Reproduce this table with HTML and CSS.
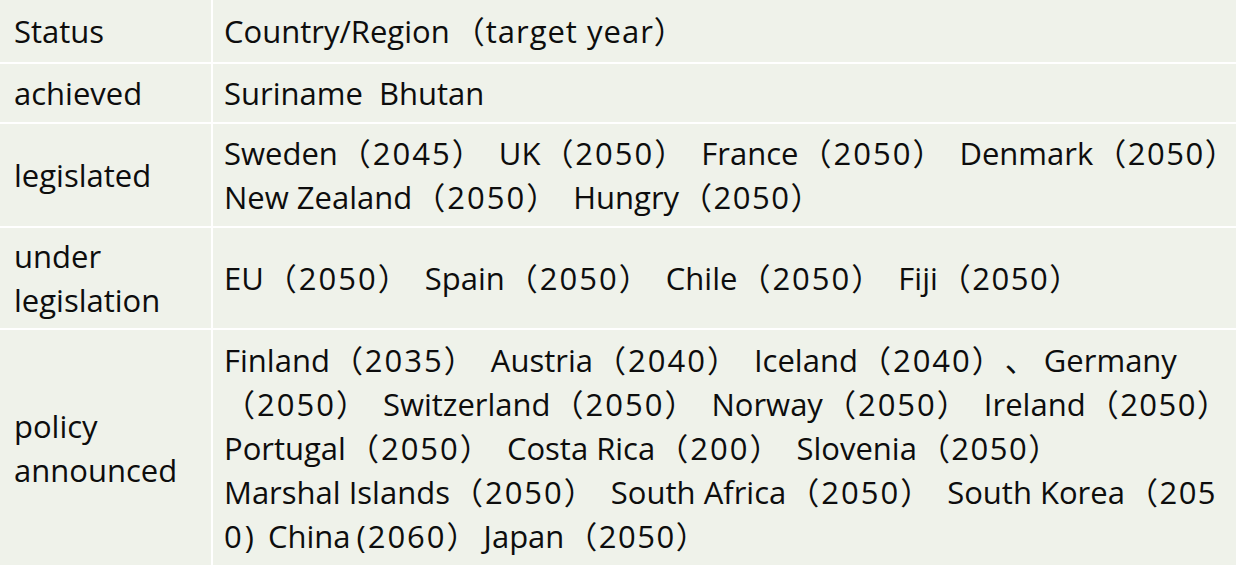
FILE: index.html
```html
<!DOCTYPE html>
<html lang="en">
<head>
<meta charset="utf-8">
<title>Carbon neutrality targets</title>
<link rel="stylesheet" href="styles.css">
</head>
<body>
<div class="table">
  <div class="cell status"><span class="ln">Status</span></div>
  <div class="cell list"><span class="ln">Country/Region<span class="y head end">（target year）</span></span></div>

  <div class="cell status"><span class="ln">achieved</span></div>
  <div class="cell list"><span class="ln">Suriname  Bhutan</span></div>

  <div class="cell status"><span class="ln">legislated</span></div>
  <div class="cell list">
    <span class="ln">Sweden<span class="y">（2045）</span> UK<span class="y">（2050）</span> France<span class="y">（2050）</span> Denmark<span class="y end">（2050）</span></span>
    <span class="ln">New Zealand<span class="y">（2050）</span> Hungry<span class="y end">（2050）</span></span>
  </div>

  <div class="cell status"><span class="ln">under</span><span class="ln">legislation</span></div>
  <div class="cell list"><span class="ln">EU<span class="y">（2050）</span> Spain<span class="y">（2050）</span> Chile<span class="y">（2050）</span> Fiji<span class="y end">（2050）</span></span></div>

  <div class="cell status"><span class="ln">policy</span><span class="ln">announced</span></div>
  <div class="cell list">
    <span class="ln">Finland<span class="y">（2035）</span> Austria<span class="y">（2040）</span> Iceland<span class="y">（2040）、</span>Germany</span>
    <span class="ln"><span class="y lead">（2050）</span> Switzerland<span class="y">（2050）</span> Norway<span class="y">（2050）</span> Ireland<span class="y end">（2050）</span></span>
    <span class="ln">Portugal<span class="y">（2050）</span> Costa Rica<span class="y">（200）</span> Slovenia<span class="y end">（2050）</span></span>
    <span class="ln">Marshal Islands<span class="y">（2050）</span> South Africa<span class="y">（2050）</span> South Korea<span class="y end">（205</span></span>
    <span class="ln"><span class="y tail">0)</span> China<span class="y tight">(2060）</span>Japan<span class="y end">（2050）</span></span>
  </div>
</div>
</body>
</html>
```

FILE: styles.css
```css
html, body {
  margin: 0;
  padding: 0;
  background: #ffffff;
}

body {
  width: 1236px;
  height: 568px;
  overflow: hidden;
  font-family: "Open Sans", "Noto Sans CJK SC", sans-serif;
  font-size: 31px;
  color: #0d0d0d;
  text-spacing-trim: space-all;
  font-kerning: none;
}

.table {
  display: grid;
  grid-template-columns: 211px 1023px;
  grid-template-rows: 62px 58px 102px 100px 235px;
  gap: 2px;
  background: #ffffff;
}

.cell {
  background: #eff2ea;
  display: flex;
  flex-direction: column;
  justify-content: center;
  min-width: 0;
}

.status {
  padding-left: 14px;
}

.list {
  padding-left: 11px;
}

.ln {
  display: block;
  white-space: pre;
  line-height: 44px;
}

/* parenthesised years: wider CJK brackets and digits as in the source slide */
.y {
  letter-spacing: 2px;
  padding: 0 6px 0 2px;
}

.y.head {
  padding-left: 4px;
}

.y.lead {
  padding-left: 0;
}

.y.end {
  padding-right: 0;
  letter-spacing: 1.5px;
}

.y.head.end {
  letter-spacing: 1px;
}

.y.tail {
  padding: 0 3px 0 0;
  letter-spacing: 3px;
}

.y.tight {
  padding: 0 4px 0 6px;
}
```
